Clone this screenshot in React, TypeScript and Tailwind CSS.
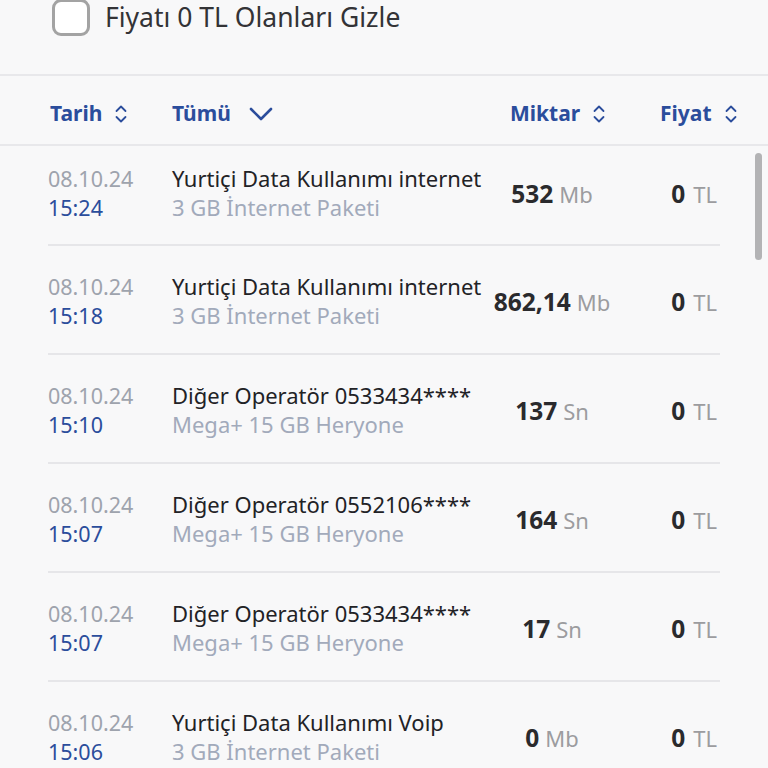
type Row = {
  date: string;
  time: string;
  title: string;
  sub: string;
  amount: string;
  unit: string;
};

const rows: Row[] = [
  { date: "08.10.24", time: "15:24", title: "Yurtiçi Data Kullanımı internet", sub: "3 GB İnternet Paketi", amount: "532", unit: "Mb" },
  { date: "08.10.24", time: "15:18", title: "Yurtiçi Data Kullanımı internet", sub: "3 GB İnternet Paketi", amount: "862,14", unit: "Mb" },
  { date: "08.10.24", time: "15:10", title: "Diğer Operatör 0533434****", sub: "Mega+ 15 GB Heryone", amount: "137", unit: "Sn" },
  { date: "08.10.24", time: "15:07", title: "Diğer Operatör 0552106****", sub: "Mega+ 15 GB Heryone", amount: "164", unit: "Sn" },
  { date: "08.10.24", time: "15:07", title: "Diğer Operatör 0533434****", sub: "Mega+ 15 GB Heryone", amount: "17", unit: "Sn" },
  { date: "08.10.24", time: "15:06", title: "Yurtiçi Data Kullanımı Voip", sub: "3 GB İnternet Paketi", amount: "0", unit: "Mb" },
];

const SortIcon = () => (
  <svg width="14" height="20" viewBox="0 0 14 20" fill="none" stroke="#2b4d9c" strokeWidth="1.8" strokeLinecap="round" strokeLinejoin="round">
    <path d="M2.5 7 L7 2.5 L11.5 7" />
    <path d="M2.5 13 L7 17.5 L11.5 13" />
  </svg>
);

const DownIcon = () => (
  <svg width="24" height="14" viewBox="0 0 24 14" fill="none" stroke="#2b4d9c" strokeWidth="2.6" strokeLinecap="round" strokeLinejoin="round">
    <path d="M2 2 L12 12 L22 2" />
  </svg>
);

export default function App() {
  return (
    <div className="w-[768px] h-[768px] overflow-hidden bg-[#f8f8f9] font-['Noto_Sans',sans-serif] relative">
      <div className="flex items-start h-[74px] pl-[52px]">
        <div className="w-[38px] h-[37px] -mt-[1px] rounded-[9px] border-[3px] border-[#a3a3a3] bg-white" />
        <span className="ml-[15px] mt-[2px] text-[26.5px] leading-[30px] text-[#333336]">Fiyatı 0 TL Olanları Gizle</span>
      </div>
      <div className="border-t-2 border-[#e8e8eb]" />
      <div className="flex items-center h-[68px] pt-[8px] text-[21px] font-bold text-[#2b4d9c]">
        <div className="w-[172px] pl-[50px] flex items-center gap-[12px]">
          <span>Tarih</span>
          <SortIcon />
        </div>
        <div className="w-[338px] flex items-center gap-[18px]">
          <span>Tümü</span>
          <DownIcon />
        </div>
        <div className="w-[150px] flex items-center gap-[12px]">
          <span>Miktar</span>
          <SortIcon />
        </div>
        <div className="flex items-center gap-[12px]">
          <span>Fiyat</span>
          <SortIcon />
        </div>
      </div>
      <div className="border-t-2 border-[#e8e8eb]" />
      <div className="ml-[48px] w-[672px]">
        {rows.map((r, i) => (
          <div
            key={i}
            className={`flex items-center ${i > 0 ? "border-t-2 border-[#e6e6e9] pt-[26px] pb-[23px]" : "pt-[18px] pb-[22px]"}`}
          >
            <div className="w-[124px] text-[21.5px] leading-[29px]">
              <div className="text-[#9ea3ad]">{r.date}</div>
              <div className="text-[#2b4d9c]">{r.time}</div>
            </div>
            <div className="w-[318px] text-[22px] leading-[29px]">
              <div className="text-[#222226] whitespace-nowrap">{r.title}</div>
              <div className="text-[#a2aabb] whitespace-nowrap">{r.sub}</div>
            </div>
            <div className="w-[124px] flex items-center justify-center pt-[3px] whitespace-nowrap">
              <span className="text-[24.5px] font-bold text-[#2a2a2d]">{r.amount}</span>
              <span className="ml-[6px] text-[22px] text-[#9c9c9f]">{r.unit}</span>
            </div>
            <div className="flex-1 flex items-center justify-end pr-[3px] pt-[3px]">
              <span className="text-[24.5px] font-bold text-[#2a2a2d]">0</span>
              <span className="ml-[8px] text-[22px] text-[#9c9c9f]">TL</span>
            </div>
          </div>
        ))}
      </div>
      <div className="absolute left-[755px] top-[153px] w-[7px] h-[107px] rounded-full bg-[#b3b3b5]" />
    </div>
  );
}
